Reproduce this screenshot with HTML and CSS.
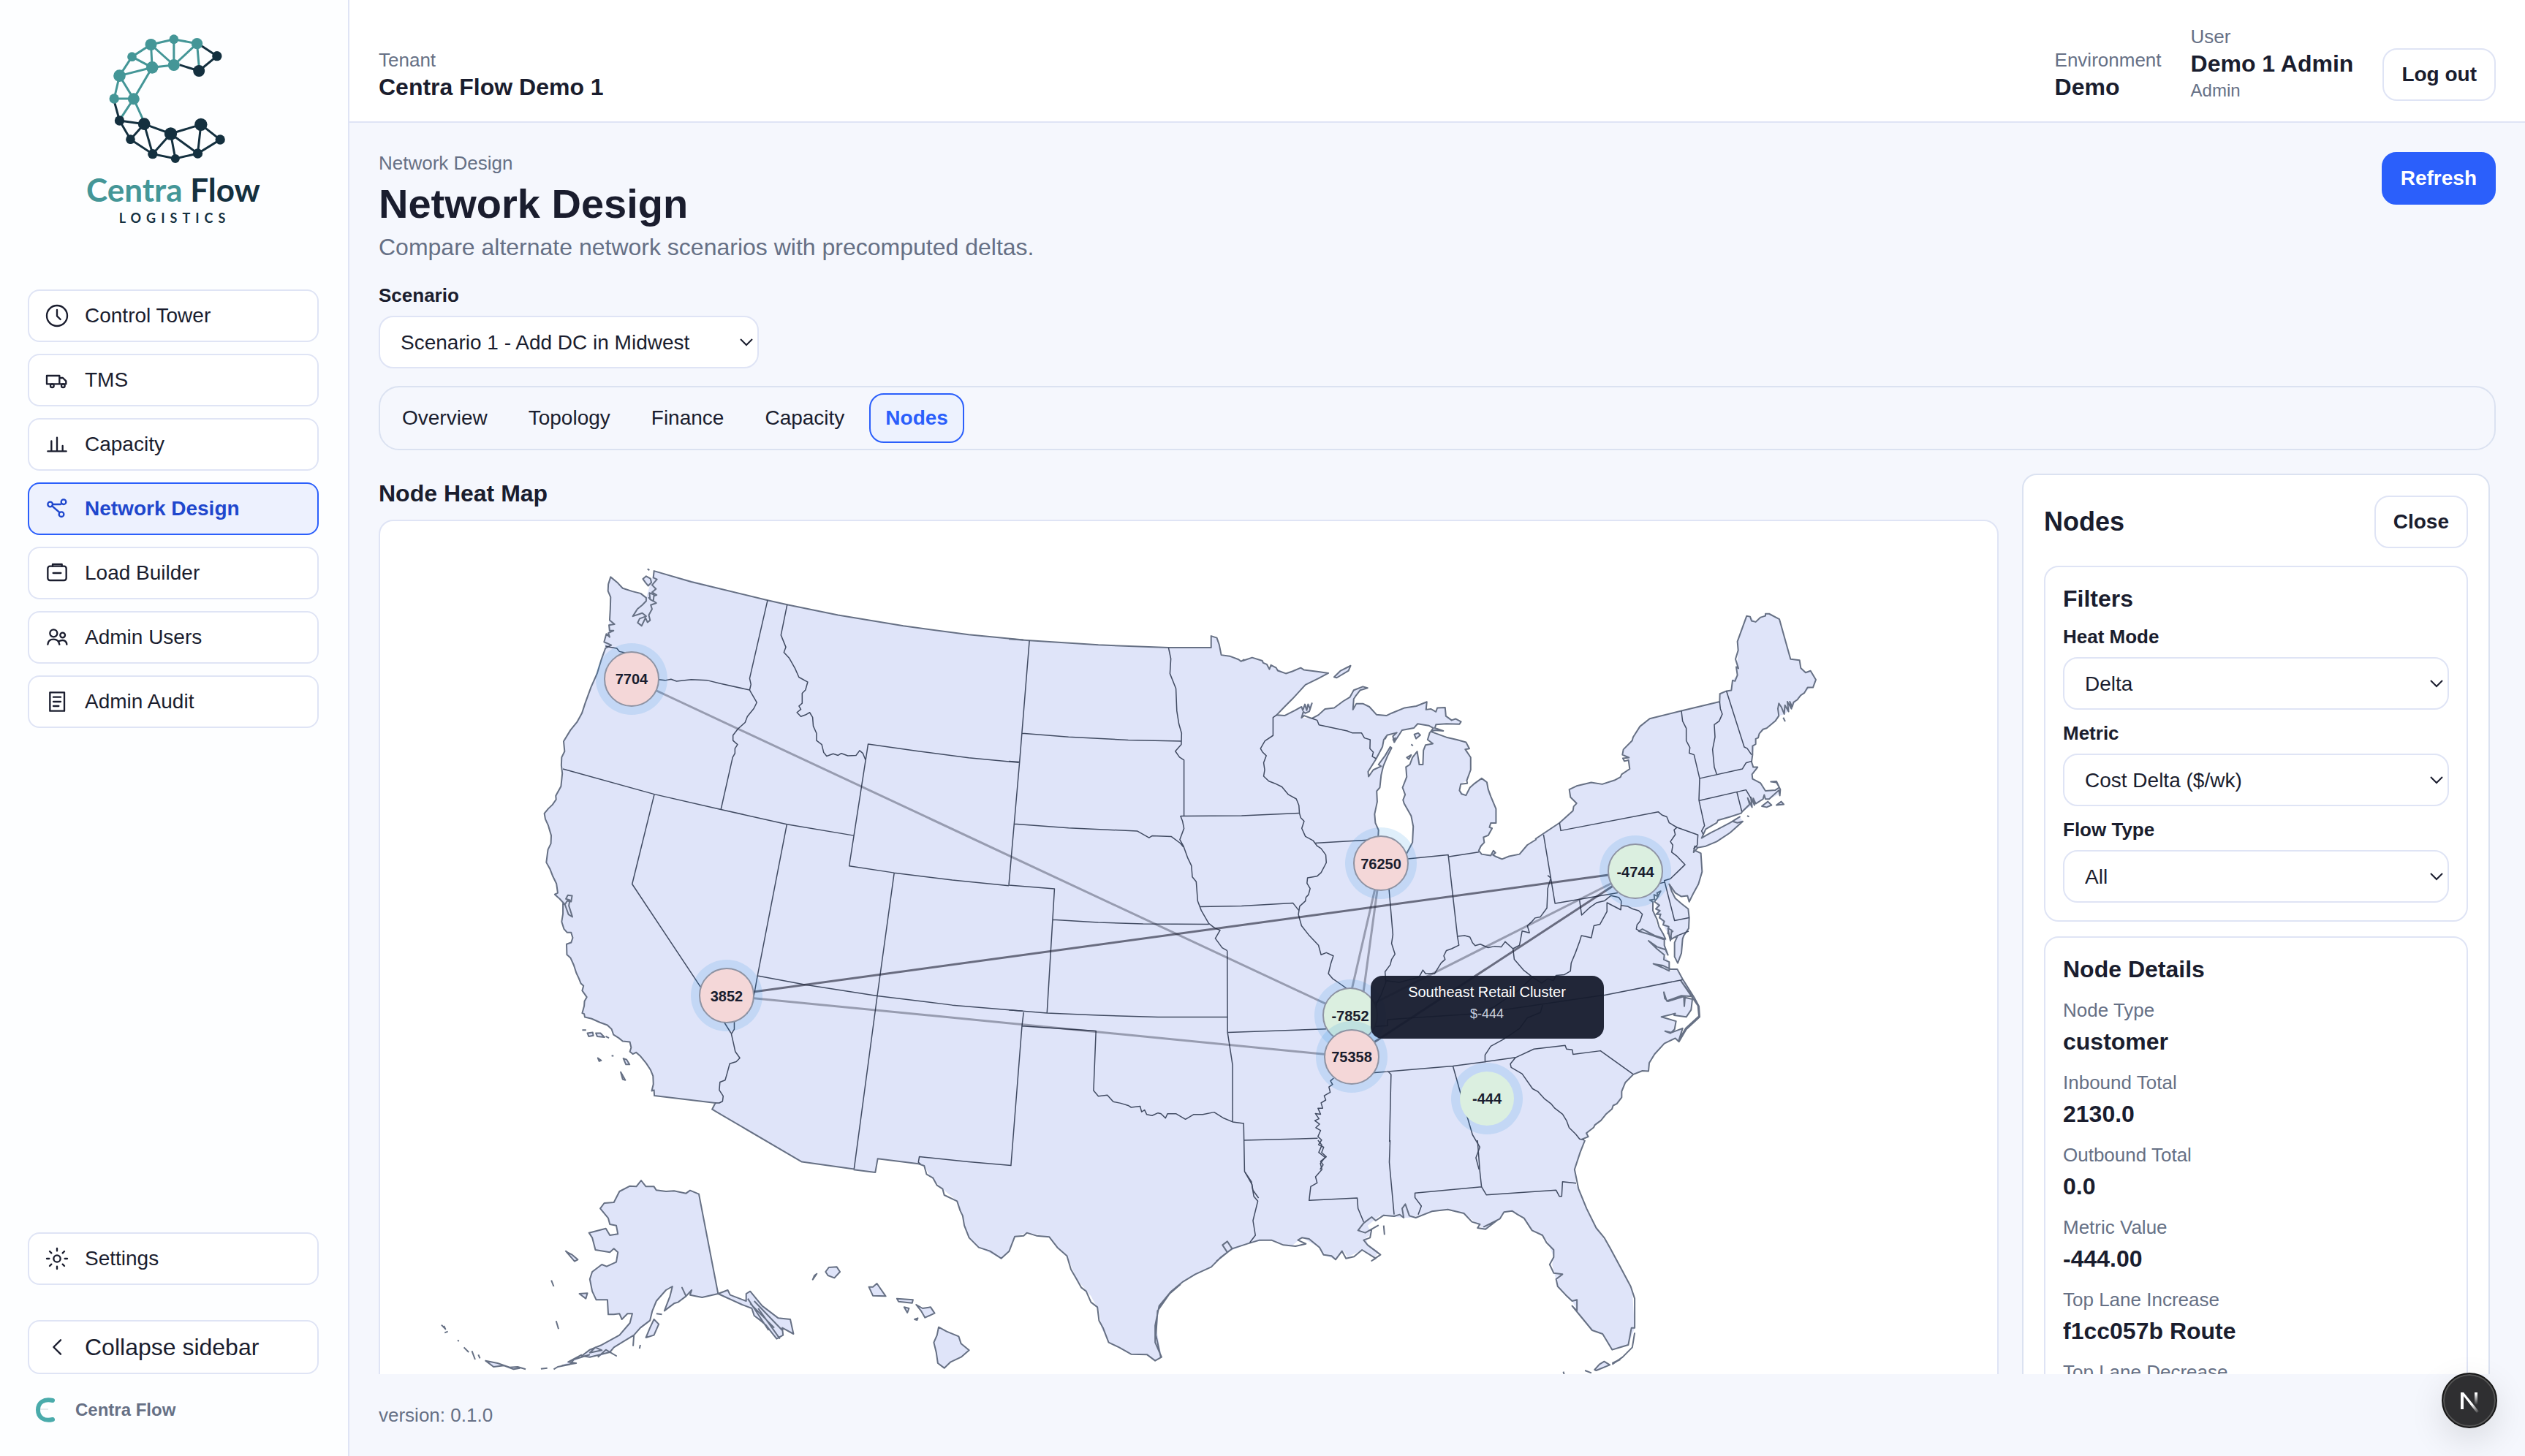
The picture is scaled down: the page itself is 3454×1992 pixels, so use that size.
FILE: index.html
```html
<!DOCTYPE html>
<html lang="en">
<head>
<meta charset="utf-8">
<title>Network Design</title>
<link rel="stylesheet" href="styles.css">
</head>
<body>
<div class="app">
  <aside class="sidebar">
    <div class="logo">
      <svg class="logo-mark" viewBox="440 130 542 546" aria-hidden="true">
        <g class="teal-line">
          <path d="M467 403L489 309L540 231L618 181L712 159L807 177L815 268M712 159V265M618 181L712 265L807 177M618 181L623 275L540 231M489 309L623 275L712 265M623 275L547 404L489 309M467 403H547L493 485M547 404L586 490"/>
        </g>
        <g class="navy-line">
          <path d="M822 184L889 228L815 289L735 264M469 420L489 493L534 570L625 630L718 649L810 628L902 571L823 509L699 547L590 507L489 493M534 570L590 507L625 630L699 547L718 649M699 547L810 628L823 509"/>
        </g>
        <g class="teal-dot"><circle cx="618" cy="181" r="24"/><circle cx="712" cy="159" r="19"/><circle cx="807" cy="177" r="23"/><circle cx="540" cy="231" r="19"/><circle cx="623" cy="275" r="25"/><circle cx="712" cy="265" r="24"/><circle cx="489" cy="309" r="25"/><circle cx="467" cy="403" r="20"/><circle cx="547" cy="404" r="24"/></g>
        <g class="navy-dot"><circle cx="889" cy="228" r="20"/><circle cx="815" cy="289" r="24"/><circle cx="489" cy="493" r="20"/><circle cx="590" cy="507" r="25"/><circle cx="534" cy="570" r="19"/><circle cx="699" cy="547" r="26"/><circle cx="823" cy="509" r="26"/><circle cx="902" cy="571" r="20"/><circle cx="625" cy="630" r="20"/><circle cx="718" cy="649" r="18"/><circle cx="810" cy="628" r="20"/></g>
      </svg>
      <div class="logo-name"><span>Centra</span> Flow</div>
      <div class="logo-sub">LOGISTICS</div>
    </div>
    <nav class="nav">
      <a class="nav-item" href="#"><svg class="icon" viewBox="0 0 108 108"><circle cx="54" cy="54" r="42"/><path d="M54 30V55L68 69"/></svg>Control Tower</a>
      <a class="nav-item" href="#"><svg class="icon" viewBox="0 0 108 108"><path d="M12 36H64V70H12ZM64 45H78L91 58V70H64"/><circle cx="34" cy="77" r="7"/><circle cx="79" cy="77" r="7"/></svg>TMS</a>
      <a class="nav-item" href="#"><svg class="icon" viewBox="0 0 108 108"><path d="M16 82H92M31 40V82M54 26V82M77 60V82"/></svg>Capacity</a>
      <a class="nav-item active" href="#"><svg class="icon" viewBox="0 0 108 108"><circle cx="26" cy="36" r="10"/><circle cx="81" cy="26" r="10"/><circle cx="72" cy="77" r="10"/><path d="M36 36H68L74 33M34 43L64 69"/></svg>Network Design</a>
      <a class="nav-item" href="#"><svg class="icon" viewBox="0 0 108 108"><rect x="16" y="26" width="76" height="58" rx="9"/><path d="M36 26V18H74V26M38 54H70"/></svg>Load Builder</a>
      <a class="nav-item" href="#"><svg class="icon" viewBox="0 0 108 108"><circle cx="40" cy="37" r="15"/><circle cx="77" cy="45" r="10"/><path d="M16 83Q18 62 40 62Q60 62 64 83M62 70Q68 66 77 66Q92 66 94 83"/></svg>Admin Users</a>
      <a class="nav-item" href="#"><svg class="icon" viewBox="0 0 108 108"><path d="M25 16H84V92H25ZM39 35H69M39 54H69M39 72H61"/></svg>Admin Audit</a>
    </nav>
    <div class="sidebar-bottom">
      <a class="nav-item" href="#"><svg class="icon" viewBox="0 0 108 108"><circle cx="54" cy="54" r="14"/><path d="M54 12V22M54 86V96M12 54H22M86 54H96M24 24L31 31M77 77L84 84M24 84L31 77M77 31L84 24"/></svg>Settings</a>
      <button class="nav-item collapse" type="button"><svg class="icon" viewBox="0 0 108 108"><path d="M69 25L40 54L69 83"/></svg>Collapse sidebar</button>
      <div class="brand"><svg class="brand-mark" viewBox="0 0 27 34"><path d="M1 16H18" stroke="#c9d6da" stroke-width="1"/><path d="M24 4C12 1 4 7 4 17C4 27 12 33 24 30" stroke="#4aabab" stroke-width="6" stroke-linecap="round" fill="none"/></svg>Centra Flow</div>
    </div>
  </aside>

  <div class="main">
    <header class="topbar">
      <div class="meta"><span class="label">Tenant</span><strong>Centra Flow Demo 1</strong></div>
      <div class="topbar-right">
        <div class="meta"><span class="label">Environment</span><strong>Demo</strong></div>
        <div class="meta"><span class="label">User</span><strong>Demo 1 Admin</strong><small>Admin</small></div>
        <button class="btn" type="button">Log out</button>
      </div>
    </header>

    <main class="content">
      <div class="page-head">
        <div class="titles">
          <span class="label">Network Design</span>
          <h1>Network Design</h1>
          <p>Compare alternate network scenarios with precomputed deltas.</p>
        </div>
        <button class="btn primary" type="button">Refresh</button>
      </div>

      <div class="field scenario">
        <label for="scenario">Scenario</label>
        <div class="select"><select id="scenario"><option>Scenario 1 - Add DC in Midwest</option></select><svg viewBox="0 0 18 12"><path d="M1 2L9 10L17 2"/></svg></div>
      </div>

      <nav class="tabs">
        <a href="#">Overview</a><a href="#">Topology</a><a href="#">Finance</a><a href="#">Capacity</a><a href="#" class="active">Nodes</a>
      </nav>

      <div class="workspace">
        <section class="map-col">
          <h2>Node Heat Map</h2>
          <div class="map-card">
            <svg class="map" viewBox="520 713 2212 1260" role="img" aria-label="Node heat map">
              <!-- land, region by region -->
              <path class="land" transform="translate(700 740) scale(.44643 .54847)" d="M436 75L784 148L844 159L1000 185L1200 212L1400 234L1568 247V1558L1254 1556L1120 1541L1116 1568L1049 1567L889 1549L614 1418L624 1402L437 1384L436 1370L429 1372L434 1355L433 1335L425 1319L412 1303L395 1286L381 1276L371 1280L362 1274L366 1264L362 1250L340 1248L328 1240L312 1232L306 1218L293 1208L270 1201L245 1192L224 1188L222 1180L216 1178L222 1160L223 1148L230 1138L216 1122L220 1110L212 1104L205 1090L198 1078L190 1058L180 1040L169 1032L168 1006L182 1002L187 990L182 977L170 977L160 968L153 950L157 930L157 905L147 893L132 882L141 878L137 855L125 835L117 818L106 802L111 770L120 755L121 735L112 710L103 694L100 680L112 668L125 658L136 645L135 636L151 612L155 580L152 560L153 540L162 525L159 500L180 472L200 452L215 430L225 405L243 365L262 330L275 295L287 268L283 252L296 228L298 210L302 170L303 140L295 125L296 108L303 90L325 105L340 118L370 126L395 131L412 142Z"/>
              <path class="land" transform="translate(1380 840) scale(.40816 .5102)" d="M0 67L69 71L300 83L535 90L678 90V59L697 64L705 82L712 110L740 113L770 122L778 127L800 125L900 272L1000 290L1100 400L1225 520V1568H0Z"/>
              <path class="land" transform="translate(1700 840) scale(.35714 .48469)" d="M0 132L36 123L75 132L92 142L102 156L108 144L128 152L165 168L190 162L222 152L235 158L290 163L328 167L290 182L240 200L190 240L130 285L160 287L200 272L225 262L265 252L255 275L225 293L265 295L290 285L315 268L350 265L385 246L410 235L425 215L460 205L478 209L450 215L425 240L422 270L435 253L460 253L485 262L512 284L550 287L570 280L620 265L665 260L705 248L702 270L740 276L745 265L775 264L778 288L800 300L815 296L836 304L830 311L780 310L740 312L736 322L768 330L720 332L780 348L820 355L855 362L868 380L852 382L873 405L873 440L858 470L835 480L830 498L855 512L870 490L885 480L915 464L935 475L950 515L970 550L970 590L950 590L945 602L955 605L940 625L922 630L925 645L904 668L915 678L950 682L958 668L970 685L993 692L1020 684L1060 678L1090 652L1125 636V1568H0Z"/>
              <path class="land" transform="translate(2100 800) scale(.33333 .48469)" d="M0 718L65 688L100 672L155 638L170 617L145 600L140 578L170 568L230 558L275 563L325 552L350 543L388 518L383 495L358 480L362 465L398 440L430 400L470 378L600 356L757 330L760 308L785 300L805 298L810 270L830 255L825 240L833 190L830 160L868 88L882 90L905 105L945 82L960 82L1002 97L1048 210L1085 213L1090 235L1110 248L1130 243L1152 268L1140 285L1105 305L1075 325L1055 345L1025 365L1000 370L985 385L950 405L920 420L905 440L892 480L888 500L895 515L913 515L890 535L892 548L925 560L945 582L985 580L1004 575L1004 590L960 605L935 605L905 618L850 640L845 645L800 655L750 665L700 690L683 715L690 712L720 700L750 690L800 672L840 655L852 668L800 700L745 725L700 738L668 742L650 748L680 758L685 810L670 845L650 870L632 895L625 878L600 880L575 870L550 845L575 885L600 900L628 915L632 940L630 970L605 1000L600 1040L585 1068L572 1050L572 1010L580 990L555 1000L545 985L525 960L510 940L495 915L505 870L483 890L485 920L500 960L525 985L540 1005L490 990L440 975L525 1000L545 1045L530 1045L550 1065L550 1090L583 1085L605 1113L655 1168L672 1190L675 1220L620 1255L590 1290L575 1280L530 1295L490 1325L468 1350L465 1373L440 1372L403 1382L370 1405L355 1430L355 1447L335 1465L320 1470L290 1495L245 1525L220 1540L215 1555L190 1568H0Z"/>
              <path class="land" transform="translate(560 1560) scale(1.09694 .33333)" d="M443 0L490 88L554 121L581 132L584 76L635 97L642 105L650 150L665 200L683 250L690 310L692 350L698 400L710 440L738 485L748 455L755 395L770 380L798 397L808 440L820 475L832 570L850 640L860 700L863 770L872 830L900 875L920 880L930 905L938 890L932 780L935 680L950 620L965 580L1000 520L1020 460L1045 425L1070 408L1100 435L1113 400L1135 440L1140 470L1155 490L1165 455L1170 480L1188 450L1205 480L1208 455L1195 430L1193 400L1200 385L1195 350L1210 310L1240 318L1250 318L1275 292L1295 284L1315 300L1330 340L1340 365L1360 325L1365 295L1375 290L1390 320L1400 370L1413 390L1420 420L1427 480L1425 510L1432 600L1450 660L1460 720L1475 780L1490 800L1500 860L1520 840L1528 770L1525 620L1510 520L1497 440L1480 360L1468 280L1455 180L1453 120L1460 50L1466 0Z"/>

              <!-- west -->
              <g transform="translate(700 740) scale(.44643 .54847)">
                <path class="coast" d="M1568 247L1400 234L1200 212L1000 185L844 159L784 148L550 102L436 75L434 92L445 96L430 110L442 120L430 128L444 135L420 142L443 155L426 160L430 170L420 185L424 198L416 203L410 192L398 212L386 204L392 194L412 188L400 180L371 188L385 170L400 160L412 150L412 142L395 131L370 126L340 118L325 105L303 90L296 108L295 125L303 140L302 170L300 198L315 208L298 210L300 224L312 224L296 230L300 240L290 232L283 252L305 260L287 268L275 295L262 330L243 365L225 405L215 430L200 452L180 472L159 500L162 525L153 540L152 560L155 580L151 612L135 636L136 645L125 658L112 668L100 680L103 694L112 710L121 735L120 755L111 770L106 802L117 818L125 835L137 855L141 878L132 882L147 893L163 907L170 898L182 900L185 885L172 884L166 893L178 896L175 910L186 938L174 932L163 907L157 905L157 930L153 950L160 968L170 977L182 977L187 990L182 1002L168 1006L169 1032L180 1040L190 1058L198 1078L205 1090L212 1104L220 1110L216 1122L230 1138L223 1148L222 1160L216 1178L222 1180L224 1188L245 1192L270 1201L293 1208L306 1218L312 1232L328 1240L340 1248L362 1250L366 1264L362 1274L371 1280L381 1276L395 1286L412 1303L425 1319L433 1335L434 1355L429 1372L436 1370L437 1384L624 1402L614 1418L889 1549L1049 1567"/>
                <path class="coast land" d="M402 95L412 88L425 94L428 104L418 112L410 104ZM416 70L422 73M232 1228L248 1226L250 1234L236 1236ZM258 1228L272 1228L284 1238L262 1236ZM216 1220L228 1220M288 1236L298 1240M264 1290L274 1296L268 1298ZM342 1291L352 1294L361 1306L350 1306ZM334 1325L348 1345L340 1343ZM306 1284L312 1285M422 130L436 134L434 150L424 146Z"/>
                <path class="state" d="M287 262L300 265L322 268L330 276L347 279L370 300L450 346L470 348L488 345L505 350L550 346L600 348L640 356L729 372M784 148L729 343L733 358L729 372L738 385L751 403L742 418L722 438L715 453L693 469L678 485L678 498L692 508L684 518L684 530L677 540L641 670M844 159L825 235L840 265L834 278L850 292L868 318L880 340L907 352L900 372L890 380L890 405L880 412L886 420L874 428L886 438L900 434L913 428L922 440L924 462L934 480L934 498L950 508L956 528L965 537L985 531L1000 535L1010 530L1030 536L1055 535L1066 523L1076 530L1084 546M1554 553L1400 541L1250 525L1092 507L1034 811L1172 828L1350 846L1523 860M157 569L437 632L641 670L843 707L1048 735M437 632L369 856L578 1112L652 1202L672 1228M682 1198L682 1218L673 1230L680 1255L685 1274L699 1290L688 1299L668 1304L660 1328L654 1345L638 1350L636 1370L648 1385L646 1398L636 1402L624 1402M843 707L753 1085L742 1135L720 1180M753 1085L900 1107L1120 1135L1350 1158L1566 1173M1172 828L1120 1135L1049 1567M1530 1558L1400 1549L1249 1536L1246 1550L1254 1556"/>
              </g>
              <!-- plains -->
              <g transform="translate(1380 840) scale(.40816 .5102)">
                <path class="coast" d="M0 67L69 71L300 83L535 90L678 90V59L697 64L705 82L712 110L740 113L770 122L778 127L790 122"/>
                <path class="state" d="M69 71L36 397L0 727M0 395L36 397M45 320L200 330L400 338L579 341M535 90L543 120L540 160L560 200L563 260L570 295L579 320L578 350L558 368L572 384L587 392L587 541M18 563L200 574L430 582L470 600L480 595L545 597L575 615L585 625M575 541L582 555L587 575L573 605L585 622L600 655L612 675L615 705L628 718L633 770L645 795L670 830L690 842L708 848L692 870L715 895L732 903M577 542L780 541L973 534M640 785L780 783L952 775L972 795M148 820L300 827L450 831L670 832M0 727L153 737L128 1070M0 1062L128 1070L300 1076L500 1081L733 1081M732 903L733 1122L750 1210L750 1362M735 1122L1063 1113M50 1065L44 1105L292 1118L284 1278L300 1293L330 1290L350 1308L375 1312L400 1318L410 1323L440 1320L445 1335L455 1330L462 1342L480 1345L500 1338L510 1340L525 1352L532 1340L560 1340L592 1355L620 1342L650 1342L688 1336L720 1352L750 1362L787 1366L790 1495L815 1530L818 1545L837 1566M44 1105L7 1480M789 1411L1035 1406"/>
              </g>
              <!-- great lakes and south east -->
              <g transform="translate(1700 840) scale(.35714 .48469)">
                <path class="coast" d="M0 132L36 123L75 132L78 138L92 142L102 156L108 144L128 152L134 160L165 168L190 162L222 152L235 158L290 163L328 167L290 182L240 200L215 220L190 240L160 262L130 285L160 287L200 272L225 262L230 272L238 255L245 272L250 255L258 268L265 252L255 275L240 280L232 276L225 293L235 287L265 295L290 285L315 268L350 265L385 246L410 235L425 215L460 205L478 209L450 215L432 232L425 240L422 270L435 253L460 253L485 262L512 284L550 287L570 280L620 265L665 260L705 248L702 270L720 268L740 276L745 265L775 264L778 288L800 300L815 296L836 304L830 311L780 310L740 312L736 322L768 330L735 328L720 332L780 348L820 355L855 362L868 380L852 382L873 405L873 440L858 470L860 478L835 480L830 498L838 508L855 512L870 490L885 480L915 464L935 475L940 495L950 515L970 550L970 590L950 590L945 602L955 605L940 625L922 630L925 645L912 655L904 668L915 678L950 682L960 668L968 674L958 680L970 685L993 692L1020 684L1060 678L1090 652L1125 636"/>
                <path class="lake" d="M720 332L730 322L712 315L670 310L655 322L610 328L600 340L580 362L575 345L590 335L553 342L546 352L550 345L540 355L535 375L510 410L480 445L482 459L500 440L530 430L520 425L545 400L565 375L570 378L555 400L538 430L530 455L525 490L513 500L515 530L505 565L508 590L520 610L518 640L550 700L600 700L625 680L650 645L653 600L645 570L618 535L614 525L622 510L612 490L628 460L625 432L640 425L650 405L668 388L676 425L690 425L692 385L700 370L728 366L708 355L716 335Z"/>
                <path class="coast land" d="M350 178L375 160L413 146L405 160L360 180ZM657 340L672 336L680 342L664 352ZM645 368L652 372M628 405L645 398L636 410ZM576 355L584 350L582 360Z"/>
                <path class="state" d="M130 285L116 292L116 343L85 358L68 380L76 390L90 400L80 420L84 440L80 458L100 472L122 478L150 488L175 510L205 522L215 540L217 562L222 575L235 585L226 605L240 628L270 640L285 655L300 662L318 680L320 702L300 730L285 740L248 745L246 760L258 775L252 792L242 800L240 810L218 825L213 848L225 880L255 908L290 935L300 962L320 956L347 965L338 985L328 1015L345 1030L375 1045L400 1058M275 647L480 638M265 295L285 300L292 313L400 330L420 336L455 336L466 350L488 355L487 380L500 390L496 402L510 408M560 775L575 905L570 930L583 960L570 975L565 990L545 1010L548 1040L530 1075L512 1100L505 1160M632 691L787 680L822 908M790 685L904 672M1168 738L1180 745L1168 775L1165 830L1140 855L1120 858L1105 870L1090 880L1098 900L1070 895L1060 935L1035 945L1005 925L990 940L965 938L940 942L910 932L890 936L880 928L870 912L850 908L822 910L828 935L800 945L780 950L770 965L775 975L760 985L735 1015L700 1015L690 1005L675 1025L650 1030L600 1040L550 1035M1152 623L1196 817L1436 787M1035 945L1040 975L1075 1005L1110 1025L1145 1042L1168 1030L1190 1035L1200 1020L1232 1018L1255 1008L1258 985L1275 955L1290 925L1297 908L1335 914L1345 880L1368 876L1395 840L1395 815L1448 835L1450 810M1290 808L1298 850L1330 828L1355 815L1385 810L1410 795L1440 800L1450 810M1380 1076L900 1128L650 1140L555 1145L555 1162L490 1165M1110 1025L1060 1060L960 1110L900 1128M1150 1100L1140 1125L1090 1140L1060 1170L1000 1200L950 1220L928 1245L928 1263M498 1295L805 1276L928 1264L1045 1252M348 1310L336 1318L344 1328L330 1335L335 1350L312 1360L318 1372L300 1380L306 1395L288 1395L298 1412L278 1410L292 1425L276 1430L294 1440L280 1450L298 1458L288 1475L302 1485L290 1498L310 1505L302 1520L320 1532L298 1545L308 1555L296 1568M555 1290L568 1300L562 1490M805 1276L835 1355L860 1420L880 1470L908 1505L893 1535L905 1568M1045 1252L1025 1270L1028 1280L1070 1298L1110 1340L1130 1348L1155 1368L1180 1382L1195 1395L1225 1412L1240 1430L1250 1450L1275 1468L1290 1482L1308 1485M1045 1252L1115 1228L1235 1218L1240 1228L1262 1230L1265 1243L1370 1233L1497 1300"/>
              </g>
              <!-- north east and atlantic coast -->
              <g transform="translate(2100 800) scale(.33333 .48469)">
                <path class="coast" d="M0 718L65 688L100 672L155 638L158 626L170 617L145 600L140 578L170 568L230 558L275 563L325 552L350 543L355 535L388 520L383 495L366 498L360 490L385 488L358 480L362 465L398 440L402 430L430 400L470 378L600 356L757 330L758 308L785 300L805 298L810 270L820 272L830 255L825 232L834 236L822 210L833 185L830 160L868 88L882 90L888 102L905 105L925 92L945 88L945 82L960 82L1002 97L1048 210L1085 213L1090 235L1110 248L1130 243L1152 268L1140 290L1118 290L1105 305L1090 312L1075 325L1060 332L1055 345L1045 330L1052 350L1035 330L1040 358L1025 340L1022 365L1010 345L1000 335L996 350L1000 370L985 385L950 405L935 408L920 420L915 432L905 435L905 450L892 455L892 480L888 500L895 515L913 515L890 535L892 548L925 560L945 582L985 580L1002 572L990 558L967 556L990 555L1006 578L1004 595L1000 580L960 605L945 605L940 593L935 605L905 618L895 603L900 622L885 600L890 628L872 602L880 620L850 640L845 645L800 655L750 665L745 672L700 690L683 715L690 712L720 700L750 690L800 672L840 655L810 668L830 672L852 668L800 700L745 725L700 738L668 742L650 755L655 738L668 742M650 748L680 758L685 810L670 845L650 870L632 895L625 878L600 880L575 870L550 845L560 865L575 885L600 900L628 915L632 940L630 970L610 990L605 1000L600 1040L585 1068L572 1050L572 1010L585 990L560 1000L552 985L565 978L545 985L548 965L525 960L530 950L510 940L515 930L497 930L512 920L495 915L510 905L490 895L500 885L515 865L500 870L505 880L488 875L490 888L470 890L483 895L483 920L500 945L508 965L525 985L535 1000L490 990L440 972L425 978L460 985L530 1002L530 1018L545 1045L535 1030L500 1022L465 1005L500 1028L530 1045L528 1058L550 1065L550 1090L520 1080L485 1070L525 1075L555 1085L583 1085L605 1113L655 1168L672 1190L675 1220L620 1255L590 1290L575 1280L530 1295L490 1325L468 1350L465 1373L440 1372L403 1382L370 1405L355 1430L355 1447L335 1465L320 1470L315 1480L290 1495L270 1512L245 1525L240 1532L210 1548L218 1558L190 1566"/>
                <path class="lake" d="M598 1118L645 1162L600 1160L540 1175L528 1150L532 1168L545 1176L610 1162L612 1190L615 1165L645 1170L640 1200L620 1220L570 1215L575 1210L518 1220L578 1232L572 1255L555 1266L533 1260L560 1264L605 1252L590 1285L618 1252L672 1218L668 1188Z"/>
                <path class="coast land" d="M930 625L955 612L970 622L950 628ZM990 622L1010 612L1020 620ZM545 970L560 975L555 1005L550 990ZM870 652L878 655M1018 375L1026 386"/>
                <path class="state" d="M100 672L105 694L505 641L520 650L540 655L550 672L582 685L668 706L665 735L650 745M582 685L570 692L575 705L555 725L565 735L560 755L580 765L615 790L585 810L555 830L530 835L572 948L632 940M500 845L530 840M585 990L630 978M600 356L605 385L620 405L620 440L635 460L632 475L652 480L675 547L672 608L695 680L683 695L690 705M757 330L760 350L768 365L755 385L735 395L738 430L728 465L735 515L745 535M785 300L858 458L870 462L888 480M673 547L850 520L865 503L888 498M674 609L865 579L885 602M828 586L848 640M352 905L380 908L400 915L425 920L440 930L430 950L418 960L415 972L430 978M281 1159L605 1115"/>
              </g>
              <!-- gulf coast, alaska, hawaii -->
              <g transform="translate(560 1560) scale(1.09694 .33333)">
                <path class="coast" d="M554 121L581 132L584 76L635 97L642 105L645 140L653 155L658 185L665 200L667 225L683 250L687 290L690 310L692 350L698 400L710 440L724 455L738 485L748 455L755 395L766 392L770 380L782 392L798 397L808 440L820 475L825 530L832 570L838 605L844 620L850 665L858 685L860 740L865 770L872 830L885 850L900 878L920 880L930 905L938 890L930 830L930 760L935 680L950 620L965 580L980 550L1000 520L1012 480L1026 445L1020 415L1014 430L1020 460L1007 495L1026 445L1045 425L1060 410L1075 410L1090 430L1105 435L1118 425L1108 410L1113 400L1122 405L1135 440L1140 470L1150 475L1155 490L1163 455L1168 485L1178 478L1188 450L1205 485L1200 495L1211 470L1205 455L1195 430L1190 410L1198 400L1200 365L1208 350L1192 380L1183 370L1190 340L1200 315L1205 330L1215 308L1228 312L1235 305L1240 318L1238 280L1242 262L1247 310L1255 318L1275 292L1295 284L1315 300L1325 335L1335 345L1332 360L1342 365L1356 330L1340 355L1360 322L1365 295L1375 290L1382 305L1390 320L1400 370L1413 390L1418 420L1427 450L1427 480L1422 510L1427 545L1438 550L1430 570L1432 600L1442 635L1450 660L1456 655L1456 700L1450 680L1460 720L1475 780L1488 795L1500 860L1510 850L1520 840L1524 770L1528 770L1528 650L1523 600L1510 520L1497 440L1490 400L1480 360L1468 280L1458 200L1453 120L1460 50L1466 0M937 890L931 800L933 700L948 630L962 590M1528 790L1525 850L1513 890L1500 920M1215 350L1216 388"/>
                <path class="state" d="M1042 130L1050 170L1053 230L1058 250L1052 330L1055 390L1048 420M1133 0L1138 20L1134 50L1142 70L1136 95L1138 120L1130 150L1132 175L1124 190L1122 247L1182 237L1183 280L1190 335M1223 0L1222 90L1228 305M1332 0L1335 130L1337 191L1254 217L1254 235L1262 270L1258 305M1337 191L1343 224L1430 205L1434 230L1437 230L1438 170L1455 176"/>
                <path class="coast land" d="M289 165L295 190L305 190L308 205L320 210L330 208L345 218L350 206L361 221L385 630L365 645L350 635L352 615L345 640L340 605L345 640L335 665L330 670L318 700L325 640L328 600L320 615L308 660L303 700L300 740L288 770L280 800L265 830L255 850L250 870L225 890L215 885L225 860L240 840L262 800L275 750L278 712L272 712L265 735L262 712L255 715L248 715L247 655L233 655L228 620L225 570L228 540L240 510L246 518L258 500L260 460L255 445L250 460L232 450L228 400L224 380L245 362L250 390L260 385L258 350L250 345L248 320L238 280L243 258L255 255L262 210L275 188L283 190ZM385 630L397 615L400 635L420 660L420 630L425 620L440 680L460 730L475 735L479 795L465 770L466 800L458 815L452 790L445 760L438 740L430 720L427 690L415 675L395 645ZM425 670L455 770M430 660L465 780M422 650L448 780M435 690L462 815M295 810L300 770L305 735L311 755L305 800ZM308 712L315 715M195 455L198 462L203 470L210 490L206 497ZM212 630L222 628L220 650ZM177 575L180 600M232 850L240 862L225 872ZM235 890L245 860L258 885L250 870M288 840L287 855M280 800L279 845M225 880L205 900L200 920L185 930L180 940M215 880L198 910L208 915L190 925M172 935L164 938M145 940L135 930L125 932L110 915L95 905L105 930L118 925L130 940L138 935M86 880L88 895M68 850L74 870M78 865L82 900M60 822L62 824M40 758L45 775L43 762M44 790L48 785M183 742L186 775M523 522L533 520L537 540L530 565L522 555L519 540ZM503 572L508 548L505 556ZM573 602L578 602L583 588L594 640L578 638ZM608 650L628 655L627 668L610 662ZM617 685L623 690L621 708ZM632 675L640 690L650 685L655 710L643 728L638 700ZM630 735L634 730L633 738ZM660 767L670 785L685 805L688 835L698 862L688 890L675 910L667 935L659 915L657 870L654 830L658 800ZM1478 942L1484 920L1490 908L1497 922L1480 945ZM1466 945L1474 955M1439 950L1440 960M1500 915L1510 900"/>
              </g>

              <g class="flows">
                <path d="M864 929L1847 1389M994 1362L1849 1446M1889 1181L1841 1389M1889 1181L1853 1446M2237 1192L1847 1389"/>
                <path class="strong" d="M994 1362L2237 1192M2237 1192L1849 1446"/>
              </g>
              <g class="nodes">
                <g class="up"><circle class="halo" cx="864" cy="929" r="49"/><circle class="dot" cx="864" cy="929" r="37"/><text x="864" y="936">7704</text></g>
                <g class="up"><circle class="halo" cx="994" cy="1362" r="49"/><circle class="dot" cx="994" cy="1362" r="37"/><text x="994" y="1370">3852</text></g>
                <g class="up"><circle class="halo" cx="1889" cy="1181" r="49"/><circle class="dot" cx="1889" cy="1181" r="37"/><text x="1889" y="1189">76250</text></g>
                <g class="down"><circle class="halo" cx="2237" cy="1192" r="49"/><circle class="dot" cx="2237" cy="1192" r="37"/><text x="2237" y="1200">-4744</text></g>
                <g class="down"><circle class="halo" cx="1847" cy="1389" r="49"/><circle class="dot" cx="1847" cy="1389" r="37"/><text x="1847" y="1397">-7852</text></g>
                <g class="up"><circle class="halo" cx="1849" cy="1446" r="49"/><circle class="dot" cx="1849" cy="1446" r="37"/><text x="1849" y="1453">75358</text></g>
                <g class="down selected"><circle class="halo" cx="2034" cy="1503" r="49"/><circle class="dot" cx="2034" cy="1503" r="37"/><text x="2034" y="1510">-444</text></g>
              </g>
              <g class="tip">
                <rect x="1875" y="1335" width="319" height="86" rx="16"/>
                <text x="2034" y="1364">Southeast Retail Cluster</text>
                <text class="tip-value" x="2034" y="1393">$-444</text>
              </g>
            </svg>
          </div>
        </section>

        <aside class="panel">
          <div class="panel-head"><h2>Nodes</h2><button class="btn" type="button">Close</button></div>
          <section class="box">
            <h3>Filters</h3>
            <div class="field"><label for="heat">Heat Mode</label><div class="select"><select id="heat"><option>Delta</option></select><svg viewBox="0 0 18 12"><path d="M1 2L9 10L17 2"/></svg></div></div>
            <div class="field"><label for="metric">Metric</label><div class="select"><select id="metric"><option>Cost Delta ($/wk)</option></select><svg viewBox="0 0 18 12"><path d="M1 2L9 10L17 2"/></svg></div></div>
            <div class="field"><label for="flow">Flow Type</label><div class="select"><select id="flow"><option>All</option></select><svg viewBox="0 0 18 12"><path d="M1 2L9 10L17 2"/></svg></div></div>
          </section>
          <section class="box details">
            <h3>Node Details</h3>
            <dl>
              <div><dt>Node Type</dt><dd>customer</dd></div>
              <div><dt>Inbound Total</dt><dd>2130.0</dd></div>
              <div><dt>Outbound Total</dt><dd>0.0</dd></div>
              <div><dt>Metric Value</dt><dd>-444.00</dd></div>
              <div><dt>Top Lane Increase</dt><dd>f1cc057b Route</dd></div>
              <div><dt>Top Lane Decrease</dt></div>
            </dl>
          </section>
        </aside>
      </div>
    </main>
    <footer class="footer">version: 0.1.0</footer>
  </div>
</div>
<button class="dev-badge" type="button" aria-label="Developer tools">
  <svg viewBox="0 0 60 60"><defs><linearGradient id="fade" x1="0" y1="0" x2="0" y2="1"><stop offset=".1" stop-color="#fff"/><stop offset="1" stop-color="#fff" stop-opacity="0"/></linearGradient><linearGradient id="fade2" x1="0" y1="0" x2="1" y2="1"><stop offset=".6" stop-color="#fff"/><stop offset="1" stop-color="#fff" stop-opacity="0"/></linearGradient></defs><path d="M18 19H22L43 45L40 47L22 24V42H18Z" fill="url(#fade2)"/><rect x="37" y="19" width="4" height="17" fill="url(#fade)"/></svg>
</button>
</body>
</html>
```
FILE: styles.css
```css
* { box-sizing: border-box; }
body {
  margin: 0;
  font-family: "Liberation Sans", Arial, sans-serif;
  font-size: 28px;
  color: #1a1d2e;
  background: #f5f7fd;
}
h1, h2, h3, p, dl, dd { margin: 0; }
button, select { font: inherit; color: inherit; }
a { color: inherit; text-decoration: none; }

.app { display: grid; grid-template-columns: 478px minmax(0, 1fr); height: 100vh; }

/* Sidebar */
.sidebar {
  display: flex;
  flex-direction: column;
  padding: 44px 40px 46px 38px;
  background: #fdfeff;
  border-right: 2px solid #dfe4f5;
}
.logo { display: flex; flex-direction: column; align-items: center; height: 352px; color: #14303f; }
.logo-mark { width: 181px; height: 182px; flex: none; }
.logo-mark path { fill: none; stroke-width: 9; }
.teal-line { stroke: #449697; }
.navy-line { stroke: #14303f; }
.teal-dot { fill: #449697; }
.navy-dot { fill: #14303f; }
.logo-name { margin-top: 8px; font: 700 44px/50px Lato, sans-serif; white-space: nowrap; }
.logo-name span { color: #449697; }
.logo-sub { margin-top: 2px; padding-left: 4px; font: 700 18px/24px Lato, sans-serif; letter-spacing: 7px; }

.nav { display: flex; flex-direction: column; gap: 16px; }
.nav-item {
  display: flex;
  align-items: center;
  gap: 20px;
  height: 72px;
  padding: 0 20px;
  border: 2px solid #dfe4f5;
  border-radius: 16px;
  background: #fff;
}
.nav-item.active { border-color: #2b5ffb; background: #edf1fe; color: #1f47cd; font-weight: 700; }
.icon { width: 36px; height: 36px; flex: none; fill: none; stroke: currentColor; stroke-width: 7; stroke-linecap: round; stroke-linejoin: round; }
.sidebar-bottom { display: flex; flex-direction: column; margin-top: auto; }
.collapse { height: 74px; margin-top: 48px; width: 100%; font-size: 32px; }
.brand { display: flex; align-items: center; gap: 28px; margin-top: 32px; padding-left: 10px; height: 34px; font-size: 24px; font-weight: 700; color: #667085; }
.brand-mark { width: 27px; height: 34px; }

/* Top bar */
.main { display: flex; flex-direction: column; min-width: 0; height: 100vh; }
.topbar {
  display: flex;
  justify-content: space-between;
  align-items: flex-end;
  flex: none;
  height: 168px;
  padding: 0 40px 28px;
  background: #fff;
  border-bottom: 2px solid #dfe4f5;
}
.topbar-right { display: flex; align-items: flex-end; gap: 40px; }
.meta { display: flex; flex-direction: column; gap: 4px; }
.meta strong { font-size: 32px; line-height: 38px; }
.meta small { font-size: 24px; line-height: 28px; color: #667085; }
.label { font-size: 26px; line-height: 28px; color: #667085; }
.btn {
  height: 72px;
  padding: 0 24px;
  border: 2px solid #dfe4f5;
  border-radius: 20px;
  background: #fff;
  font-weight: 700;
}
.btn.primary { border-color: #2b5ffb; background: #2b5ffb; color: #fff; }

/* Page */
.content { display: flex; flex-direction: column; flex: 1; min-height: 0; padding: 40px 40px 0; }
.page-head { display: flex; justify-content: space-between; align-items: flex-start; }
.titles { display: flex; flex-direction: column; gap: 4px; }
.titles .label { line-height: 30px; }
h1 { font-size: 56px; line-height: 74px; }
.titles p { font-size: 32px; line-height: 36px; color: #667085; }
.field { display: flex; flex-direction: column; gap: 12px; }
.field label { font-size: 26px; line-height: 32px; font-weight: 700; }
.scenario { width: 520px; margin-top: 32px; }
.select { position: relative; }
.select select {
  display: block;
  width: 100%;
  height: 72px;
  padding: 0 28px;
  border: 2px solid #dfe4f5;
  border-radius: 20px;
  background: #fff;
  appearance: none;
}
.select svg { position: absolute; right: 8px; top: 30px; width: 18px; height: 12px; fill: none; stroke: #1a1d2e; stroke-width: 2; pointer-events: none; }

.tabs { display: flex; gap: 12px; margin-top: 24px; padding: 8px; border: 2px solid #dbe2f1; border-radius: 28px; }
.tabs a { padding: 0 20px; border: 2px solid transparent; border-radius: 20px; line-height: 64px; }
.tabs .active { border-color: #2b5ffb; background: #edf2fe; color: #2b5ffb; font-weight: 700; }

.workspace {
  display: grid;
  grid-template-columns: minmax(0, 1fr) 640px;
  gap: 32px;
  flex: 1;
  min-height: 0;
  margin-top: 32px;
  padding-right: 8px;
  align-items: start;
  overflow-y: auto;
  scrollbar-width: none;
}
.map-col { display: flex; flex-direction: column; gap: 16px; padding-top: 8px; }
h3, .map-col h2 { font-size: 32px; line-height: 39px; }
.map-card { border: 2px solid #dfe4f5; border-radius: 20px; background: #fff; overflow: hidden; }
.map { display: block; width: 100%; }

.map path { vector-effect: non-scaling-stroke; }
.land { fill: #dfe4f9; }
.coast { stroke: #667084; stroke-width: 2; stroke-linejoin: round; }
.coast:not(.land) { fill: none; }
.lake { fill: #fff; stroke: #667084; stroke-width: 2; stroke-linejoin: round; }
.state { fill: none; stroke: #414b62; stroke-width: 1.5; stroke-linejoin: round; }
.flows { fill: none; stroke: #1a1d2e; stroke-width: 3; stroke-opacity: .36; }
.flows .strong { stroke-opacity: .6; }
.nodes text { font-size: 20px; font-weight: 700; text-anchor: middle; fill: #1a1d2e; }
.halo { fill: #0882e1; fill-opacity: .13; }
.dot { stroke: #8e93a3; stroke-width: 2; }
.up .dot { fill: #f4d7d8; }
.down .dot { fill: #dbefe0; }
.selected .dot { stroke: none; }
.tip rect { fill: #161b2d; fill-opacity: .95; }
.tip text { font-size: 20px; text-anchor: middle; fill: #fff; }
.tip .tip-value { font-size: 18px; fill: #c9cddb; }

/* Side panel */
.panel { padding: 28px; border: 2px solid #dbe2f1; border-radius: 20px; background: #fff; }
.panel-head { display: flex; justify-content: space-between; align-items: center; margin-bottom: 24px; }
.panel-head h2 { font-size: 36px; }
.box { display: flex; flex-direction: column; gap: 16px; padding: 24px; border: 2px solid #dfe4f5; border-radius: 20px; }
.details { gap: 20px; margin-top: 20px; }
.details dl { display: flex; flex-direction: column; gap: 20px; }
.details dt { font-size: 26px; line-height: 32px; color: #667085; }
.details dd { margin-top: 8px; font-size: 32px; line-height: 39px; font-weight: 700; }

.footer { flex: none; height: 112px; padding-left: 40px; font-size: 26px; line-height: 112px; color: #667085; }

.dev-badge {
  position: fixed;
  right: 38px;
  bottom: 38px;
  width: 76px;
  height: 76px;
  padding: 6px;
  border: 2px solid #171717;
  border-radius: 50%;
  background: #2f2f31;
  box-shadow: inset 0 0 0 2px #555, 0 16px 48px rgba(0, 0, 0, .12);
}
.dev-badge svg { display: block; width: 60px; height: 60px; }
```
